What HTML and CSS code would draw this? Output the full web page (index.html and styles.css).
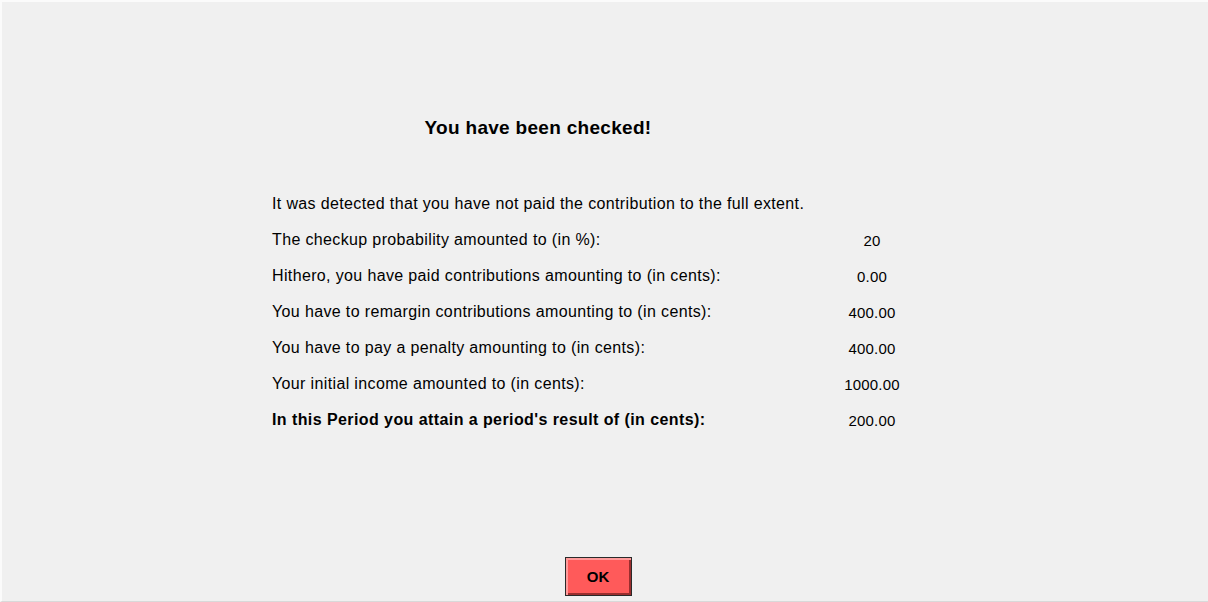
FILE: index.html
```html
<!DOCTYPE html>
<html lang="en">
<head>
<meta charset="utf-8">
<title>Checkup result</title>
<link rel="stylesheet" href="styles.css">
</head>
<body>
<div class="screen">
  <main class="panel">
    <h1 class="title">You have been checked!</h1>
    <div class="results">
      <div class="row">
        <span class="label">It was detected that you have not paid the contribution to the full extent.</span>
        <span class="value"></span>
      </div>
      <div class="row">
        <span class="label">The checkup probability amounted to (in %):</span>
        <span class="value">20</span>
      </div>
      <div class="row">
        <span class="label">Hithero, you have paid contributions amounting to (in cents):</span>
        <span class="value">0.00</span>
      </div>
      <div class="row">
        <span class="label">You have to remargin contributions amounting to (in cents):</span>
        <span class="value">400.00</span>
      </div>
      <div class="row">
        <span class="label">You have to pay a penalty amounting to (in cents):</span>
        <span class="value">400.00</span>
      </div>
      <div class="row">
        <span class="label">Your initial income amounted to (in cents):</span>
        <span class="value">1000.00</span>
      </div>
      <div class="row total">
        <span class="label">In this Period you attain a period's result of (in cents):</span>
        <span class="value">200.00</span>
      </div>
    </div>
  </main>
  <footer class="actions">
    <button class="ok-button" type="button">OK</button>
  </footer>
</div>
</body>
</html>
```
FILE: styles.css
```css
html, body {
  margin: 0;
  padding: 0;
  background: #f0f0f0;
}

body {
  font-family: "Liberation Sans", Arial, sans-serif;
  color: #000;
}

.screen {
  box-sizing: border-box;
  width: 1208px;
  height: 602px;
  border-top: 2px solid #fbfbfb;
  border-left: 2px solid #fbfbfb;
  border-bottom: 1px solid #d9d9d9;
  display: flex;
  flex-direction: column;
}

.panel {
  flex: 1;
  display: flex;
  flex-direction: column;
  padding-left: 270px;
}

.title {
  margin: 115px 0 0 0;
  width: 532px;
  text-align: center;
  font-size: 19px;
  font-weight: bold;
  letter-spacing: 0.3px;
  line-height: 22px;
}

.results {
  margin-top: 47px;
  display: flex;
  flex-direction: column;
}

.row {
  display: grid;
  grid-template-columns: 560px 80px;
  height: 36px;
  align-items: center;
  font-size: 16px;
  letter-spacing: 0.36px;
}

.value {
  text-align: center;
  font-size: 15px;
  letter-spacing: 0.2px;
}

.total .label {
  font-weight: bold;
  letter-spacing: 0.42px;
}

.actions {
  display: flex;
  justify-content: center;
  padding-bottom: 5px;
}

.ok-button {
  margin-left: -14px;
  width: 67px;
  height: 39px;
  box-sizing: border-box;
  background: #ff5a5a;
  border: 1px solid #2a2a2a;
  box-shadow: inset 2px 2px 0 #ff9a9a, inset -2px -2px 0 #9a2e2e;
  font-family: "Liberation Sans", Arial, sans-serif;
  font-size: 15px;
  font-weight: bold;
  color: #000;
  padding: 0;
}
```
